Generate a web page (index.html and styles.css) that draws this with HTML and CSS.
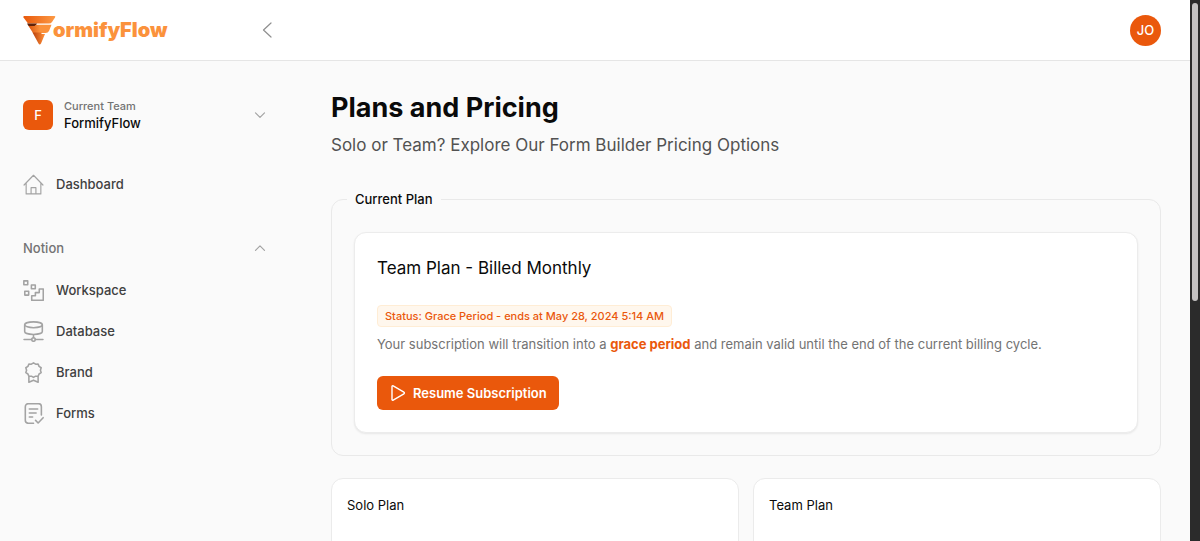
FILE: index.html
```html
<!DOCTYPE html>
<html lang="en">
<head>
<meta charset="utf-8">
<meta name="viewport" content="width=device-width, initial-scale=1">
<title>Plans and Pricing - FormifyFlow</title>
<link rel="stylesheet" href="styles.css">
</head>
<body>
<div class="app">
  <header class="topbar">
    <a class="logo" href="#">
      <svg class="logo-mark" viewBox="0 0 33 29" aria-hidden="true">
        <defs>
          <linearGradient id="top" x1="0" x2="1"><stop offset="0" stop-color="#e8590c"/><stop offset="1" stop-color="#fd9a45"/></linearGradient>
          <linearGradient id="mid" x1="0" x2="1"><stop offset="0" stop-color="#d9530d"/><stop offset=".5" stop-color="#fb923c"/></linearGradient>
          <linearGradient id="low" x1="0" x2="1"><stop offset="0" stop-color="#b9410c"/><stop offset=".9" stop-color="#fb8a35"/></linearGradient>
        </defs>
        <path fill="url(#top)" d="M1 0H31.500Q33 0 32 1.500L29 6Q28 7.500 26 7.500H5L.5 1.500Q0 0 1 0Z"/>
        <path fill="#5f2108" d="M4 7.500H14L12.500 10H5.500Z"/>
        <path fill="url(#mid)" d="M5.500 10H11.500Q12.500 8.800 14.500 8.800H28.500L26 15Q25 17 22.500 17H10Z"/>
        <path fill="url(#low)" d="M9.500 16.500H18.500V18H22L18 27.500Q16.700 29.500 15.500 27.500Z"/>
      </svg>
      <span class="logo-text">ormifyFlow</span>
    </a>
    <button class="icon-button collapse" type="button" aria-label="Collapse sidebar">
      <svg width="10" height="16" viewBox="0 0 10 16"><path d="M9 1 1.500 8 9 15"/></svg>
    </button>
    <button class="avatar" type="button">JO</button>
  </header>
  <div class="body">
    <nav class="sidebar">
      <button class="team" type="button">
        <span class="team-badge">F</span>
        <span class="team-info"><span class="team-label">Current Team</span><span class="team-name">FormifyFlow</span></span>
        <svg class="chevron" viewBox="0 0 12 8"><path d="m1.500 1.800 4.500 4.500 4.500-4.500"/></svg>
      </button>
      <a class="item" href="#">
        <svg class="item-icon" viewBox="0 0 20 20"><path d="M1 10.500 10 1.200l9 9.300M3 8.500V19h14V8.500M7.700 19v-6h4.600v6"/></svg>
        Dashboard
      </a>
      <button class="group" type="button">Notion
        <svg class="chevron" viewBox="0 0 12 8"><path d="m1.500 6.300 4.500-4.500 4.500 4.500"/></svg>
      </button>
      <div class="items">
        <a class="item" href="#">
          <svg class="item-icon bold" viewBox="0 0 20 20"><path d="M.8.8h3.700v3.700H.8zM8 4.700h3.700v3.700H8zM1.700 10.700h3.700v3.700H1.700zM15.500 8.500h3.800v10.800H8.300v-4.300h3.500v-3h3.700z"/></svg>
          Workspace
        </a>
        <a class="item" href="#">
          <svg class="item-icon bold" viewBox="0 0 20 20"><ellipse cx="10" cy="3.600" rx="8.400" ry="2.800"/><path d="M1.600 3.600v6.400c0 1.600 3.700 2.800 8.400 2.800s8.400-1.200 8.400-2.800V3.600M10 12.800v3M1 17.700h7.200M11.800 17.700H19"/><circle cx="10" cy="17.600" r="1.700"/></svg>
          Database
        </a>
        <a class="item" href="#">
          <svg class="item-icon bold" viewBox="0 0 20 20"><path d="m10 .8 2 1.300 2.400-.1.900 2.200 2 1.300-.7 2.300.7 2.300-2 1.300-.9 2.200-2.400-.1-2 1.200-2-1.200-2.400.1-.9-2.200-2-1.300.7-2.300-.7-2.300 2-1.300.9-2.200 2.400.1zM5.600 13.600v5.700l4.400-2 4.400 2v-5.700"/></svg>
          Brand
        </a>
        <a class="item" href="#">
          <svg class="item-icon bold" viewBox="0 0 20 20"><path d="M17.500 11.500V3.500a2.800 2.800 0 0 0-2.800-2.800H5a2.800 2.800 0 0 0-2.800 2.800v13A2.800 2.800 0 0 0 5 19.300h5M6 5.700h8M6 9.500h6.500M6 13.300h3.200M12 16.600l2.400 2.400 4.800-5"/></svg>
          Forms
        </a>
      </div>
    </nav>
    <main class="main">
      <h1 class="title">Plans and Pricing</h1>
      <p class="subtitle">Solo or Team? Explore Our Form Builder Pricing Options</p>
      <fieldset class="current">
        <legend class="legend">Current Plan</legend>
        <section class="card">
          <h2 class="card-title">Team Plan - Billed Monthly</h2>
          <span class="status">Status: Grace Period - ends at May 28, 2024 5:14 AM</span>
          <p class="note">Your subscription will transition into a <strong>grace period</strong> and remain valid until the end of the current billing cycle.</p>
          <button class="resume" type="button">
            <svg width="16" height="18" viewBox="0 0 16 18"><path d="M2 2.600v12.800a.8.8 0 0 0 1.200.7l10.700-6.300a.9.900 0 0 0 0-1.600L3.200 1.900A.8.8 0 0 0 2 2.600z"/></svg>
            Resume Subscription
          </button>
        </section>
      </fieldset>
      <div class="plans">
        <section class="plan"><h3 class="plan-title">Solo Plan</h3></section>
        <section class="plan"><h3 class="plan-title">Team Plan</h3></section>
      </div>
    </main>
  </div>
</div>
<div class="scroll-track"><div class="scroll-thumb"></div></div>
</body>
</html>
```
FILE: styles.css
```css
* { box-sizing: border-box; }
body {
  margin: 0;
  height: 100vh;
  display: flex;
  overflow: hidden;
  background: #fafafa;
  color: #0a0a0a;
  font: 13px/20px Inter, "Liberation Sans", sans-serif;
}
h1, h2, h3, p { margin: 0; font-weight: 400; }
button { border: 0; padding: 0; background: none; color: inherit; font: inherit; text-align: left; }
a { color: inherit; text-decoration: none; }
svg { display: block; flex: none; fill: none; stroke: #a3a3a3; stroke-linecap: round; stroke-linejoin: round; }
.app { display: flex; flex-direction: column; flex: 1; min-width: 0; overflow: hidden; }
.topbar {
  display: flex;
  flex: none;
  align-items: center;
  height: 61px;
  padding: 0 29px 0 23px;
  background: #fff;
  border-bottom: 1px solid #e5e5e5;
}
.logo { display: flex; align-items: center; width: 239px; }
.logo-mark { width: 33px; height: 29px; stroke: none; }
.logo-text { margin-left: -3px; color: #fb923c; font-size: 20px; font-weight: 900; }
.collapse svg { stroke: #8f8f8f; stroke-width: 1.2; }
.avatar {
  width: 31px;
  height: 31px;
  margin-left: auto;
  border-radius: 50%;
  background: #ea580c;
  color: #fff;
  font-weight: 500;
  text-align: center;
}
.body { display: flex; flex: 1; }
.sidebar { flex: none; width: 301px; padding: 37px 35px 0 23px; }
.team { display: flex; align-items: center; width: 100%; }
.team-badge {
  width: 30px;
  height: 30px;
  border-radius: 6px;
  background: #ea580c;
  color: #fff;
  font-weight: 500;
  line-height: 30px;
  text-align: center;
}
.team-info { display: flex; flex-direction: column; flex: 1; margin-left: 11px; line-height: 17px; }
.team-label { color: #737373; font-size: 11px; font-weight: 500; }
.team-name { font-weight: 500; }
.chevron { width: 12px; height: 8px; stroke-width: 1.2; }
.item { display: flex; align-items: center; gap: 12px; height: 34px; color: #404040; font-weight: 500; }
.item-icon { width: 21px; height: 21px; stroke-width: 1.1; }
.bold { stroke-width: 1.5; }
.team + .item { margin-top: 35px; }
.group { display: flex; align-items: center; justify-content: space-between; width: 100%; margin: 37px 0 15px; color: #737373; font-weight: 500; }
.items { display: grid; gap: 7px; }
.main { flex: 1; min-width: 0; padding: 29px 29px 0 30px; }
.title { font-size: 27px; font-weight: 700; line-height: 36px; }
.subtitle { margin-top: 6px; color: #525252; font-size: 17px; line-height: 26px; }
.current { margin: 31px 0 0; padding: 23px 22px 22px; min-width: 0; border: 1px solid #e9e9e9; border-radius: 12px; }
.legend { margin-left: -7px; padding: 0 8px; font-weight: 500; }
.card { padding: 22px; border: 1px solid #ececec; border-radius: 12px; background: #fff; box-shadow: 0 1px 2px #00000014; }
.card-title { font-size: 17px; line-height: 26px; }
.status {
  display: inline-block;
  margin-top: 24px;
  padding: 0 7px;
  border: 1px solid #ffedd5;
  border-radius: 4px;
  background: #fff7ed;
  color: #ea580c;
  font-size: 11px;
  font-weight: 500;
}
.note { margin-top: 7px; color: #737373; }
.note strong { color: #ea580c; font-weight: 700; }
.resume {
  display: flex;
  align-items: center;
  gap: 7px;
  height: 34px;
  margin-top: 22px;
  padding: 0 12px 0 13px;
  border-radius: 6px;
  background: #ea580c;
  color: #fff;
  font-weight: 600;
}
.resume svg { stroke: #fff; stroke-width: 1.4; }
.plans { display: grid; grid-template-columns: 1fr 1fr; gap: 14px; margin-top: 22px; }
.plan { min-height: 80px; padding: 16px 15px; border: 1px solid #ebebeb; border-radius: 12px; background: #fff; }
.plan-title { font-size: 13px; }
.scroll-track { flex: none; width: 10px; padding: 3px 2px; background: #2b2b2b; }
.scroll-thumb { height: 55vh; border-radius: 3px; background: #c4c2c2; }
```
